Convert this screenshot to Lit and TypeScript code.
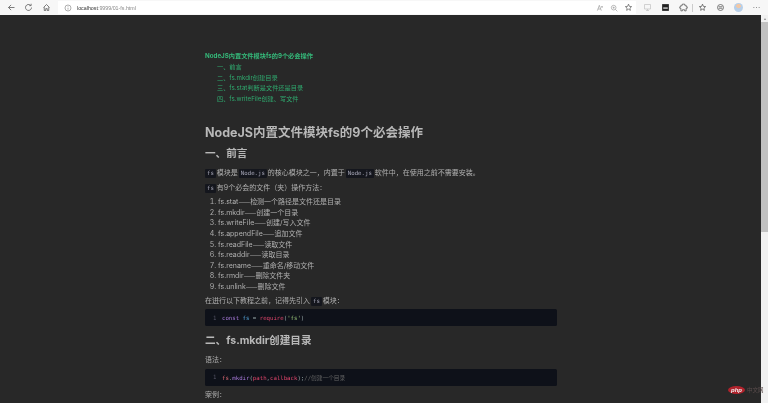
import { LitElement, html, css } from "lit";
import { customElement } from "lit/decorators.js";

const toc = ["一、前言", "二、fs.mkdir创建目录", "三、fs.stat判断是文件还是目录", "四、fs.writeFile创建、写文件"];
const steps: [string, string][] = [
  ["fs.stat", "检测一个路径是文件还是目录"],
  ["fs.mkdir", "创建一个目录"],
  ["fs.writeFile", "创建/写入文件"],
  ["fs.appendFile", "追加文件"],
  ["fs.readFile", "读取文件"],
  ["fs.readdir", "读取目录"],
  ["fs.rename", "重命名/移动文件"],
  ["fs.rmdir", "删除文件夹"],
  ["fs.unlink", "删除文件"],
];

@customElement("app-root")
export class AppRoot extends LitElement {
  static styles = css`
    :host { display: flex; flex-direction: column; width: 768px; height: 403px; overflow: hidden; background: #282828; position: relative;
      font-family: "Inter", "Noto Sans CJK SC", sans-serif; color: #b0b0b0; }
    .chrome { height: 15px; flex: none; background: #f7f7f7; display: flex; align-items: center; padding-left: 6.5px; filter: blur(0.3px); }
    .chrome svg { display: block; flex: none; }
    .nav { display: flex; gap: 8.5px; align-items: center; width: 51.5px; flex: none; }
    .url { width: 578px; flex: none; height: 13px; background: #fff; display: flex; align-items: center; padding: 0 3.5px 0 6px; box-sizing: border-box; font: 5.3px "Liberation Sans", sans-serif; color: #888; gap: 5px; }
    .url b { font-weight: 400; color: #333; }
    .url .addr { flex: 1; }
    .url .right { display: flex; gap: 6px; align-items: center; }
    .tools { display: flex; align-items: center; margin-left: 6.5px; gap: 9px; }
    .sep { width: 1px; height: 8px; background: #ccc; margin: 0 -4.5px; }
    .avatar { width: 9px; height: 9px; border-radius: 50%; background: radial-gradient(circle at 50% 35%, #f0c8a8 0 30%, #b8cfe8 32%); }
    .main { flex: 1; display: flex; min-height: 0; }
    .page { flex: 1; min-width: 0; padding: 36.3px 0 0 205px; overflow: hidden; filter: blur(0.3px); }
    .bar { width: 7px; flex: none; background: #f1f1f1; display: flex; flex-direction: column; align-items: center; filter: blur(0.3px); }
    .bar i { display: block; width: 0; height: 0; margin-top: 3px; border: 1.5px solid transparent; border-top: 0; border-bottom: 2px solid #888; }
    .thumb { width: 7px; height: 210px; margin-top: 2px; background: #c1c1c1; }
    .content { width: 352px; font-size: 7px; line-height: 10.6px; }
    .toc { color: #2fa96e; font-size: 6.2px; line-height: 10.7px; }
    .toc .title { font-weight: 700; color: #35b97a; }
    .toc .item { padding-left: 12px; }
    h1 { margin: 0; font-size: 12.5px; line-height: 18px; font-weight: 700; color: #b8b8b8; padding-top: 19.2px; }
    h2 { margin: 0; font-size: 10.6px; line-height: 15px; font-weight: 700; color: #b8b8b8; }
    .h2a { padding-top: 4px; }
    .h2b { padding-top: 7px; }
    p { margin: 0; }
    .p1 { padding-top: 7px; }
    .p2 { padding-top: 4px; }
    .p3 { padding-top: 4px; }
    .p4 { padding-top: 7px; }
    .p5 { padding-top: 4px; }
    code { font: 5.7px/9px "DejaVu Sans Mono", "Noto Sans CJK SC", monospace; background: #14161d; color: #aab; padding: 0 2px; border-radius: 1px; margin: 0 1px; display: inline-block; }
    code.first { margin-left: 0; }
    ol { margin: 3px 0 0; padding: 0 0 0 13px; }
    li { height: 10.6px; }
    .dash { font-family: "Noto Sans CJK SC", sans-serif; }
    .block { background: #0e1119; border-radius: 1.5px; height: 17px; margin-top: 3px; display: flex; align-items: center; padding-left: 8px; font: 5.7px "DejaVu Sans Mono", "Noto Sans CJK SC", monospace; color: #9aa; white-space: pre; }
    .ln { color: #556; width: 9px; }
    .k { color: #a679d8; } .v { color: #55a6dc; } .f { color: #e06c75; } .s { color: #98c379; } .r { color: #e0456b; } .c { color: #666; }
    .logo { position: absolute; left: 728px; top: 385px; display: flex; align-items: center; height: 9px; filter: blur(0.3px); }
    .pill { width: 17px; height: 8px; border-radius: 50%; background: #b0232c; color: #eee; font: italic 700 6px/8px "Liberation Sans", sans-serif; text-align: center; }
    .cn { font: 5.5px/8px "Noto Sans CJK SC", sans-serif; color: #5a4c4c; margin-left: 2px; white-space: nowrap; }
  `;

  icon(d: string, size = 9, stroke = "#555") {
    return html`<svg width=${size} height=${size} viewBox="0 0 12 12" fill="none" stroke=${stroke} stroke-width="1"><path d=${d}></path></svg>`;
  }

  render() {
    return html`
      <div class="chrome">
        <div class="nav">
          ${this.icon("M10 6H2M5.500 2.500 2 6l3.500 3.500")}
          ${this.icon("M10 6a4 4 0 1 1-1.200-2.900M9.500 1v2.500H7")}
          ${this.icon("M2 6l4-4 4 4M3 5.500V10h2V7.500h2V10h2V5.500")}
        </div>
        <div class="url">
          ${this.icon("M6 1.500a4.500 4.500 0 1 0 0 9 4.500 4.500 0 0 0 0-9M6 5.500V8.500M6 3.500v1", 8, "#888")}
          <span class="addr"><b>localhost</b>:9999/01-fs.html</span>
          <span class="right">
            ${this.icon("M2 10 5 2l3 8M3 7.500h4M9 3v3M8 4h2", 8, "#999")}
            ${this.icon("M5.500 2a3.500 3.500 0 1 0 0 7 3.500 3.500 0 0 0 0-7M8 8l3 3M4 5.500h3M5.500 4v3", 8, "#999")}
            ${this.icon("M6 1.500 7.200 4.500l3 .3-2.300 2 .6 3L6 8.300 3.500 9.800l.6-3-2.300-2 3-.3z", 9, "#666")}
          </span>
        </div>
        <div class="tools">
          ${this.icon("M2 2h8v6H2zM4 10h4M6 8v2", 9, "#c4c4c4")}
          <svg width="9" height="9" viewBox="0 0 12 12"><path fill="#222" d="M1.500 1.500h9v9h-9z"></path><path fill="#fff" d="M3 6h6v1.500H3z"></path></svg>
          ${this.icon("M4.500 1.500h3v1.500h2v2h1.500v2H9.500v3.500h-2v-1.500h-3v1.500h-2V7H1V5h1.500V3h2z")}
          <span class="sep"></span>
          ${this.icon("M6 1.500 7.200 4.500l3 .3-2.300 2 .6 3L6 8.300 3.500 9.800l.6-3-2.300-2 3-.3z", 9)}
          ${this.icon("M6 2a4 4 0 1 0 0 8 4 4 0 0 0 0-8M3.500 5h5M3.500 7h5", 9)}
          <span class="avatar"></span>
          ${this.icon("M2 6h1M5.500 6h1M9 6h1", 9, "#444")}
        </div>
      </div>
      <div class="main">
        <div class="page">
          <div class="content">
            <div class="toc">
              <div class="title">NodeJS内置文件模块fs的9个必会操作</div>
              ${toc.map((t) => html`<div class="item">${t}</div>`)}
            </div>
            <h1>NodeJS内置文件模块fs的9个必会操作</h1>
            <h2 class="h2a">一、前言</h2>
            <p class="p1"><code class="first">fs</code>模块是<code>Node.js</code>的核心模块之一，内置于<code>Node.js</code>软件中，在使用之前不需要安装。</p>
            <p class="p2"><code class="first">fs</code>有9个必会的文件（夹）操作方法：</p>
            <ol>${steps.map(([a, b]) => html`<li>${a}<span class="dash">——</span>${b}</li>`)}</ol>
            <p class="p3">在进行以下教程之前，记得先引入<code>fs</code>模块：</p>
            <div class="block"><span class="ln">1</span><span><span class="k">const</span> <span class="v">fs</span> = <span class="r">require</span>(<span class="s">'fs'</span>)</span></div>
            <h2 class="h2b">二、fs.mkdir创建目录</h2>
            <p class="p4">语法：</p>
            <div class="block"><span class="ln">1</span><span><span class="f">fs</span>.<span class="k">mkdir</span>(<span class="r">path</span>,<span class="r">callback</span>);<span class="c">//创建一个目录</span></span></div>
            <p class="p5">案例：</p>
          </div>
        </div>
        <div class="bar"><i></i><div class="thumb"></div></div>
      </div>
      <div class="logo"><span class="pill">php</span><span class="cn">中文网</span></div>
    `;
  }
}
